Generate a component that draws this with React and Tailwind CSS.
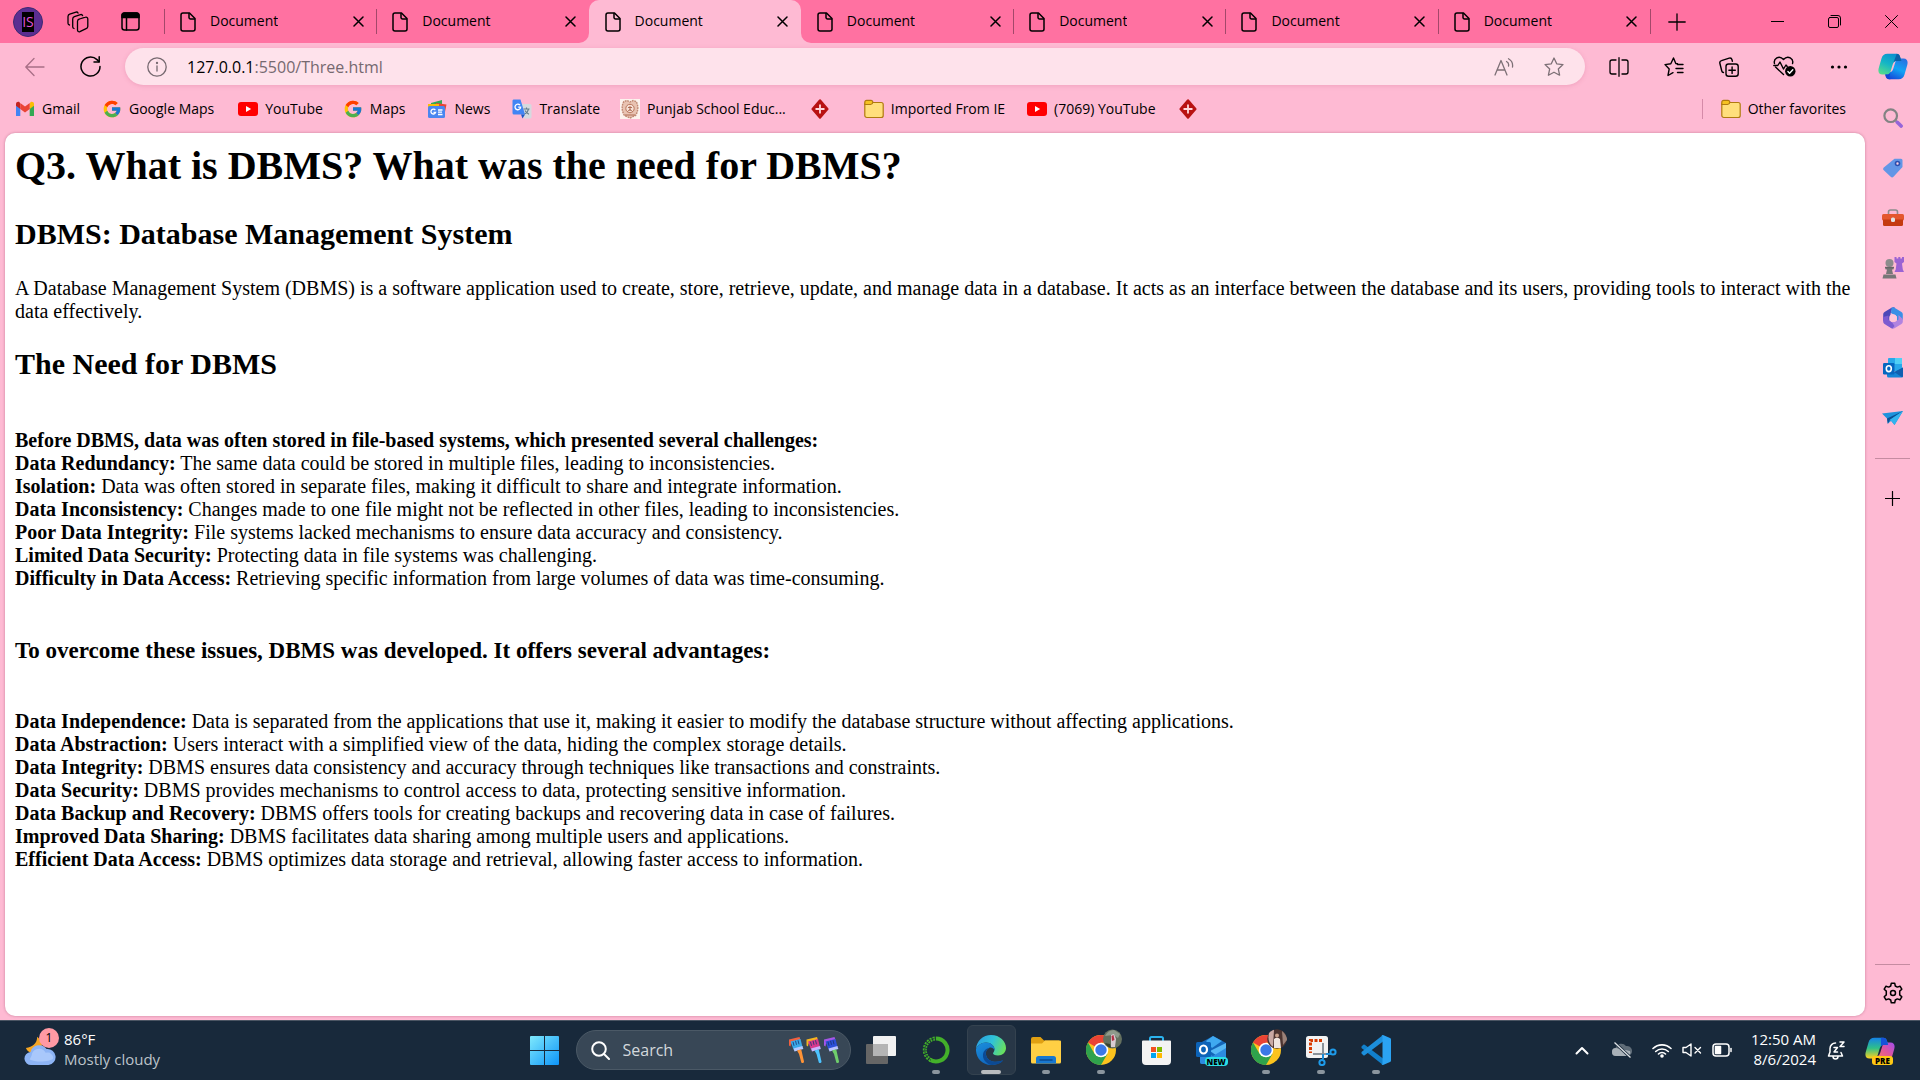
import React from "react";
import { FcGoogle } from "react-icons/fc";

const Line = ({ className = "w-5 h-5", box = "0 0 20 20", sw = 1.3, children }) => (
  <svg
    className={className}
    viewBox={box}
    fill="none"
    stroke="currentColor"
    strokeWidth={sw}
    strokeLinecap="round"
    strokeLinejoin="round"
    aria-hidden="true"
  >
    {children}
  </svg>
);

const Art = ({ className = "w-5 h-5", box = "0 0 20 20", children }) => (
  <svg className={className} viewBox={box} aria-hidden="true">
    {children}
  </svg>
);

/* ---------- browser chrome icons ---------- */

const DocIcon = () => (
  <Line className="w-4 h-5 shrink-0" box="0 0 16 20" sw={1.5}>
    <path d="M3 1h6.500L15 6.500V17a2 2 0 0 1-2 2H3a2 2 0 0 1-2-2V3a2 2 0 0 1 2-2z" />
    <path d="M9 1.500V5.500a1.500 1.500 0 0 0 1.500 1.500H14.500" />
  </Line>
);
const CloseIcon = () => (
  <Line className="w-[11px] h-[11px]" box="0 0 11 11" sw={1.5}>
    <path d="M1 1l9 9M10 1l-9 9" />
  </Line>
);
const WorkspacesIcon = () => (
  <Line className="w-[22px] h-[22px]" box="0 0 22 22" sw={1.3}>
    <path d="M12.500 8l6-1.800a1.700 1.700 0 0 1 2.300 1.700v7.500a2.500 2.500 0 0 1-1.700 2.300l-6.200 3a1.700 1.700 0 0 1-2.400-1.600V10.300A2.500 2.500 0 0 1 12.500 8z" />
    <path d="M7 17.500a1.800 1.800 0 0 1-1.300-1.800V8a2.500 2.500 0 0 1 1.700-2.300L13.500 3.600A1.700 1.700 0 0 1 15.600 4.600" />
    <path d="M2.500 14a1.800 1.800 0 0 1-1.500-1.800V5.500a2.500 2.500 0 0 1 1.700-2.300L9 1.100a1.700 1.700 0 0 1 2 1" />
  </Line>
);
const TabActionsIcon = () => (
  <Line className="w-[19px] h-[19px]" box="0 0 19 19" sw={1.5}>
    <rect x="1" y="1" width="17" height="17" rx="2.500" />
    <path d="M1 3.500A2.500 2.500 0 0 1 3.500 1h12A2.500 2.500 0 0 1 18 3.500V5.500H1z" fill="currentColor" />
    <path d="M5.500 6v12" />
  </Line>
);
const BackIcon = () => (
  <Line className="w-5 h-5 text-[#a86f86]">
    <path d="M19 10H1M9 1.500L.8 10 9 18.500" />
  </Line>
);
const ReloadIcon = () => (
  <Line className="w-[21px] h-[21px]" box="0 0 21 21" sw={1.5}>
    <path d="M20 10.500A9.500 9.500 0 1 1 17 3.600L19 5.600" />
    <path d="M19.200.800V6H14" />
  </Line>
);
const InfoIcon = () => (
  <Line className="w-5 h-5 text-[#766970]">
    <circle cx="10" cy="10" r="9.200" />
    <path d="M10 9v5" />
    <circle cx="10" cy="6" r=".5" fill="currentColor" />
  </Line>
);
const ReadAloudIcon = () => (
  <Line className="w-5 h-[18px] text-[#7d7076]" box="0 0 20 18" sw={1.3}>
    <path d="M1 17L7 2.500 13 17M3 12h8" />
    <path d="M12.500 3.500a4 4 0 0 1 2 4.500M14.500.800A8 8 0 0 1 18.500 9" />
  </Line>
);
const STAR = "M10 1l2.700 5.800 6.300.8-4.700 4.300 1.300 6.300L10 15.200l-5.600 3L5.700 11.900 1 7.600l6.300-.8z";
const StarIcon = () => (
  <Line className="w-5 h-5 text-[#7d7076]">
    <path d={STAR} />
  </Line>
);
const SplitIcon = () => (
  <Line>
    <path d="M7 3H3a2 2 0 0 0-2 2v10a2 2 0 0 0 2 2h4M13 3h4a2 2 0 0 1 2 2v10a2 2 0 0 1-2 2h-4M10 .7v18.600" />
  </Line>
);
const FavoritesIcon = () => (
  <Line sw={1.400}>
    <path d="M13.500 6.800L11.800 6.500 9.500 1 6.800 6.800 1 7.600l4.200 4.300L4 18.500l5-2.800" />
    <path d="M13.500 7.500H19M12 11.500h7M13.500 15.500H19" />
  </Line>
);
const CollectionsIcon = () => (
  <Line sw={1.400}>
    <rect x="7" y="7" width="12.200" height="12.200" rx="2.500" />
    <path d="M13.100 10v6.400M9.900 13.200h6.400" />
    <path d="M4.500 15.500a2 2 0 0 1-1.700-1.500L.9 6.500A2.300 2.300 0 0 1 2.500 3.700L10.200 1.100A2.300 2.300 0 0 1 13 2.700l.4 1.500" />
  </Line>
);
const EssentialsIcon = () => (
  <Line className="w-[23px] h-[21px]" box="0 0 23 21" sw={1.4}>
    <path d="M1.500 7.500C.2 3 6-1.500 10.500 3.500c4.500-5 10.500-.5 9 4M2.500 11l8 7.500" />
    <path d="M.8 9.500h4L7 6l3.500 7 2.500-4 1.200 1.500" />
    <circle cx="17.300" cy="15.300" r="5.200" fill="#000" stroke="none" />
    <path d="M14.900 15.500l1.700 1.700 3.200-3.400" stroke="#fff" />
  </Line>
);
const MoreIcon = () => (
  <Art className="w-5 h-5">
    <circle cx="3.500" cy="10" r="1.600" />
    <circle cx="10" cy="10" r="1.600" />
    <circle cx="16.500" cy="10" r="1.600" />
  </Art>
);

/* ---------- bookmark icons ---------- */

const GmailIcon = () => (
  <Art>
    <path d="M1 5v12h4.300V9.500z" fill="#4285f4" />
    <path d="M19 5v12h-4.300V9.500z" fill="#34a853" />
    <path d="M14.700 5.300V10L19 6.700V5c0-2-2.200-2.700-3.600-1.700z" fill="#fbbc04" />
    <path d="M5.300 5.300V10L1 6.700V5c0-2 2.200-2.700 3.600-1.700z" fill="#c5221f" />
    <path d="M5.300 10V4l4.700 3.600L14.700 4v6L10 13.500z" fill="#ea4335" />
  </Art>
);
const YouTubeIcon = () => (
  <Art>
    <rect x="0" y="3" width="20" height="14" rx="3" fill="#f00" />
    <path d="M8 7v6l5.200-3z" fill="#fff" />
  </Art>
);
const NewsIcon = () => (
  <Art>
    <path d="M4 4l11-3v7H4z" fill="#34a853" />
    <path d="M9 4l10.500 1.500L18 13H9z" fill="#ea4335" />
    <path d="M1 5h11v6H1z" fill="#fbbc04" />
    <rect x="1" y="7" width="17" height="12" rx="1.500" fill="#4a86f0" />
    <path d="M8.300 11.200a2.400 2.400 0 1 0 .3 2.200H6.500M11 11h4.500M11 13.200h4M11 15.500h4.500" stroke="#fff" strokeWidth="1.300" fill="none" />
  </Art>
);
const TranslateIcon = () => (
  <Art>
    <path d="M8 5h10a1.500 1.500 0 0 1 1.500 1.500V18a1.500 1.500 0 0 1-1.500 1.500h-6z" fill="#d5d9df" />
    <path d="M11.500 10h6M14.500 8.500V10M16.500 10c-.5 2.500-2 4-4 5M13 11.500c1 2 2 3 4 3.800" stroke="#607d8b" strokeWidth="1.100" fill="none" />
    <path d="M1.500.5h7l4.500 15H2A1.500 1.500 0 0 1 .5 14V2A1.500 1.500 0 0 1 1.500.5z" fill="#4285f4" />
    <path d="M9 15.500h4l-2.500 4z" fill="#1a56c4" />
    <path d="M8 6.200a2.800 2.800 0 1 0 .6 2H6.200" stroke="#fff" strokeWidth="1.300" fill="none" />
  </Art>
);
const CrestIcon = () => (
  <Art>
    <rect width="20" height="20" fill="#fdf3ee" />
    <path d="M4 2.500C1.500 6 1.500 12 4.500 16.500L10 19l5.500-2.500C18.500 12 18.500 6 16 2.500L13 1.500 10 3 7 1.500z" fill="#e9c3b2" stroke="#c08a74" strokeWidth="1.400" strokeDasharray="1.800 .8" />
    <circle cx="10" cy="9.500" r="4.200" fill="#f6e0d5" stroke="#b9765c" strokeWidth="1" />
    <path d="M8 8.500h4M10 7v5M7.500 12.500L10 10.500l2.500 2M5 16h10" stroke="#a8624a" strokeWidth=".9" fill="none" />
  </Art>
);
const RedDiamondIcon = () => (
  <Art>
    <path d="M10 1.500l7.300 8.500L10 18.500 2.700 10z" fill="#b81212" stroke="#b81212" strokeWidth="2.500" strokeLinejoin="round" />
    <path d="M10 5.500v9M5.500 10h9" stroke="#ffd9dc" strokeWidth="1.800" />
  </Art>
);
const FolderIcon = () => (
  <Art>
    <rect x=".8" y="3.500" width="18.400" height="15" rx="2" fill="#ffdf7c" stroke="#b07a10" strokeWidth="1.200" />
    <path d="M.8 5.500V3.200A1.800 1.800 0 0 1 2.600 1.400H7a1.800 1.800 0 0 1 1.800 1.800A2.500 2.500 0 0 1 6.500 5.500z" fill="#f5c222" stroke="#b07a10" strokeWidth="1.200" />
  </Art>
);

/* ---------- sidebar icons ---------- */

const RIBBON =
  "M10 .5h9.500c2.300 0 3.200 1 4 3.400L24.700 8H20c-2.600 0-3.600 1.500-4.400 4.200l-2.200 7c-.9 2.300-2 3.300-4.400 3.300H4.800C.8 22.500-.2 19.500.8 15.500l3-10.200C4.800 2.200 6.500.5 10 .5z";
const Copilot = () => (
  <Art className="w-[30px] h-[27px]" box="0 0 32 28">
    <defs>
      <linearGradient id="cpA" x1="0.700" y1="0" x2="0.200" y2="1">
        <stop offset="0" stopColor="#0a8fd0" />
        <stop offset=".5" stopColor="#14b5c6" />
        <stop offset="1" stopColor="#55dc8c" />
      </linearGradient>
      <linearGradient id="cpB" x1="0.700" y1="0" x2="0.200" y2="1">
        <stop offset="0" stopColor="#1649d8" />
        <stop offset=".5" stopColor="#12a4f5" />
        <stop offset="1" stopColor="#2a6fe0" />
      </linearGradient>
    </defs>
    <path d={RIBBON} transform="rotate(180 16 14)" fill="url(#cpB)" />
    <path d={RIBBON} fill="url(#cpA)" />
    <path d="M20 .5c2 0 3 1 3.700 3.400L25 8h-5.500c-1.500 0-2.500.7-3 1.800z" fill="#0c62a8" />
    <path d="M7.500 22.500h2c2 0 3-.7 3.800-2.500l-1 3.500c-.7 2.500 0 4 1.500 4h-2.500c-2 0-2.800-1.300-3.200-3z" fill="#1545d6" />
  </Art>
);
const SearchSide = () => (
  <Art className="w-5 h-5">
    <circle cx="7.700" cy="7.700" r="6.300" fill="none" stroke="#838383" strokeWidth="2.200" />
    <path d="M12.300 12.300l2 2" stroke="#8a8a8a" strokeWidth="2" />
    <path d="M14.300 14.300l3.800 3.800" stroke="#9665d8" strokeWidth="3.600" strokeLinecap="round" />
  </Art>
);
const TagSide = () => (
  <Art className="w-5 h-5">
    <path d="M11.500.8H18A1.500 1.500 0 0 1 19.500 2.300V9L10.500 18.800a2 2 0 0 1-2.800 0L.8 12.200a1.800 1.800 0 0 1 0-2.600z" fill="#6296e6" />
    <circle cx="14.500" cy="5.500" r="2" fill="#ffd1df" stroke="#2c4fae" strokeWidth="1.600" />
  </Art>
);
const ToolboxSide = () => (
  <Art className="w-[22px] h-[18px]" box="0 0 22 18">
    <path d="M6.500 6V3a2 2 0 0 1 2-2h5a2 2 0 0 1 2 2v3" fill="none" stroke="#8c8c8c" strokeWidth="1.600" />
    <rect x="0" y="5" width="22" height="6.500" rx="1.500" fill="#e4572e" />
    <path d="M1 10.500h20v5A1.500 1.500 0 0 1 19.500 17h-17A1.500 1.500 0 0 1 1 15.500z" fill="#c43a10" />
    <rect x="9" y="8.500" width="4" height="4.500" rx="1.500" fill="#e3e3e3" />
  </Art>
);
const GamesSide = () => (
  <Art className="w-[22px] h-[22px]" box="0 0 22 22">
    <path d="M12.500 0h2v1.500h1.800V0h2v1.500H20V0h2v5l-2 1.500.8 6 1.200 2.500h-9.500l1.200-2.500.8-6-2-1.500z" fill="#9b63d3" />
    <circle cx="7.500" cy="6" r="4" fill="#8c8c8c" />
    <path d="M3.500 10.500h8v2H10l1 4.500H4l1-4.500H3.500zM1.500 17.500h12l1 4h-14z" fill="#777" />
    <path d="M3 9.800h9v1.600H3z" fill="#666" />
  </Art>
);
const M365Side = () => (
  <Art className="w-5 h-[22px]" box="0 0 20 22">
    <path d="M8.500.8L12 0 8.500 3.500 7.500 7v4.500L3.500 16 1.500 15A2.500 2.500 0 0 1 .2 12.800V7.200A2.500 2.500 0 0 1 1.500 5z" fill="#4b48b8" />
    <path d="M8.500.8A3 3 0 0 1 11.500.8L18.500 5a2.500 2.500 0 0 1 1.300 2.200v5.500L14 14V9.500L8 6z" fill="#3a8fe6" />
    <path d="M19.800 12v2.800a2.500 2.500 0 0 1-1.300 2.200l-7 4.200a3 3 0 0 1-3 0L3.500 18l5-3 3.500 0 3.500-2.500V8z" fill="#b183e0" />
    <path d="M.2 10v4.800A2.500 2.500 0 0 0 1.500 17l7 4.200 1 .3 2-2.500-2-3-4-3.500V8.500z" fill="#7d5bd0" />
    <circle cx="10" cy="11" r="3.800" fill="#ffc6d9" />
  </Art>
);
const OutlookSide = () => (
  <Art className="w-5 h-5">
    <rect x="5" y="0" width="14" height="13" rx="1" fill="#28a8ea" />
    <path d="M12 0h7v6h-7z" fill="#50d0f5" />
    <path d="M4 10l8 4 8-4.500V18a1.500 1.500 0 0 1-1.500 1.500H5.500A1.500 1.500 0 0 1 4 18z" fill="#1484d6" />
    <path d="M20 9.500V18a1.500 1.500 0 0 1-.8 1.300L11 14z" fill="#0f5fb0" />
    <rect x="0" y="5" width="11.500" height="11.500" rx="1.200" fill="#0766bf" />
    <ellipse cx="5.800" cy="10.700" rx="2.500" ry="2.900" fill="none" stroke="#fff" strokeWidth="1.600" />
  </Art>
);
const DropSide = () => (
  <Art className="w-[21px] h-[15px]" box="0 0 21 15">
    <path d="M0 2.500L21 0l-8.500 14-3.300-4.200-3.400 3L5 7.500z" fill="#1d92dc" />
    <path d="M21 0L5 7.500l.8 5.300L8 8.800z" fill="#0c4f92" />
    <path d="M21 0L8 8.800 12.500 14z" fill="#33b3ee" />
  </Art>
);
const GearIcon = () => (
  <Line className="w-[22px] h-[22px]" box="0 0 22 22" sw={1.500}>
    <path d="M9.300 1.200h3.400l.6 2.800 2 1.100 2.700-.9 1.800 3-2.100 1.900v3.800l2.100 1.900-1.800 3-2.700-.9-2 1.100-.6 2.800H9.300L8.700 18l-2-1.100-2.700.9-1.800-3 2.100-1.900V9.100L2.200 7.200l1.800-3 2.700.9 2-1.100z" />
    <circle cx="11" cy="11" r="2.500" />
  </Line>
);

/* ---------- taskbar icons ---------- */

const WeatherArt = () => (
  <Art className="w-8 h-[34px]" box="0 0 34 36">
    <path d="M14 4c0 7-5 11-12 12 2 5 8 7 13 4s6-11-1-16z" fill="#f5a623" />
    <path d="M8 34a7 7 0 0 1-1-14 9.500 9.500 0 0 1 17-3 8.500 8.500 0 0 1 2 17z" fill="#8db4f5" />
    <path d="M8 24a8 8 0 0 1 15-3 6 6 0 0 1 8 6c-3 4-20 4-25 1z" fill="#a9c8fb" />
  </Art>
);
const WindowsLogo = () => (
  <Art className="w-[29px] h-[29px]" box="0 0 29 29">
    <defs>
      <linearGradient id="win" x1="0" y1="0" x2="1" y2="1">
        <stop offset="0" stopColor="#7fe9fc" />
        <stop offset="1" stopColor="#0d94f8" />
      </linearGradient>
    </defs>
    <path d="M1 0h13v14H0V1a1 1 0 0 1 1-1zM15 0h13a1 1 0 0 1 1 1v13H15zM0 15h14v14H1a1 1 0 0 1-1-1zM15 15h14v13a1 1 0 0 1-1 1H15z" fill="url(#win)" />
  </Art>
);
const Brush = ({ x, a, b, c, d }) => (
  <g transform={`translate(${x} 0)`}>
    <path d="M0 2.500L10.500 0l1 3L2 6.500 1.500 9.500 0 8.500z" fill={a} />
    <path d="M1.500 4.500L11.500 2l2 8L4.500 12.500z" fill={b} />
    <path d="M4 4.800l1 4M6.500 3.800l1 4M9 3.300l1 4" stroke="#17316e" strokeWidth=".8" />
    <path d="M4.500 11.500L13.500 9l.8 3L5.500 14.500z" fill={d} />
    <path d="M8 13.500l4.200-1.200L15 24.500a1.500 1.500 0 0 1-2.700 1L10 17z" fill={c} />
  </g>
);
const Brushes = () => (
  <Art className="w-[51px] h-[26px]" box="0 0 51 26">
    <Brush x={0} a="#f2603f" b="#3aa9ea" c="#ff9336" d="#b5c8ff" />
    <Brush x={17.500} a="#f6b51e" b="#d6388f" c="#4cc2ff" d="#c9b4ff" />
    <Brush x={35} a="#a556e8" b="#2c50d8" c="#6fce6c" d="#b9c2ff" />
  </Art>
);
const TaskViewArt = () => (
  <Art className="w-[30px] h-[28px]" box="0 0 30 28">
    <rect x="0" y="8" width="22" height="20" rx="1" fill="#666" />
    <rect x="7" y="0" width="23" height="20" rx="1" fill="#f1f1f1" />
    <rect x="7" y="8" width="15" height="12" fill="#b4b4b4" />
  </Art>
);
const AnacondaArt = () => (
  <Art className="w-7 h-7" box="0 0 28 28">
    <path d="M14 2.500a11.500 11.500 0 1 1-6 21.300" fill="none" stroke="#43b02a" strokeWidth="4" />
    <path d="M9 24.200A11.500 11.500 0 0 1 14 2.500" fill="none" stroke="#43b02a" strokeWidth="4" strokeDasharray="2 1" />
    <path d="M9 24.200A11.500 11.500 0 0 1 14 2.500" fill="none" stroke="#1b3a34" strokeWidth="1" strokeDasharray="1.500 1.500" />
  </Art>
);
const EdgeArt = () => (
  <Art className="w-[30px] h-[30px]" box="0 0 30 30">
    <defs>
      <linearGradient id="edA" x1="0" y1=".3" x2="1" y2=".6">
        <stop offset="0" stopColor="#2a9fe0" />
        <stop offset=".5" stopColor="#2fc2d8" />
        <stop offset="1" stopColor="#6be05a" />
      </linearGradient>
      <linearGradient id="edB" x1="0" y1="0" x2=".6" y2="1">
        <stop offset="0" stopColor="#1b8fdd" />
        <stop offset="1" stopColor="#0f63bb" />
      </linearGradient>
    </defs>
    <path d="M0 14C.5 6 7 0 15 0c9 0 15 6.500 15 13 0 4.500-3.500 7.500-8 7.500-3.500 0-5-1.200-5-2.200 0-.8 1.500-1.500 1.500-4C18.500 11 15 7.500 10 7.500 5 7.500 1.500 10.500 0 14z" fill="url(#edA)" />
    <path d="M0 14C1.500 10.500 5 7.500 10 7.500c5 0 8.500 3.500 8.500 6.800 0 .4 0 .8-.1 1.100C17.500 13 15 12 13 13c-3 1.500-4 5-2.500 8.500 2 4.500 8 6.500 14 4.500 1.500-.5 2.500-.8 2.300-.2C24.500 28.500 20 30 15 30 6 30-.5 22.500 0 14z" fill="url(#edB)" />
    <path d="M13 13c-3 1.500-4 5-2.500 8.500 2 4.500 8 6.500 14 4.500 1.500-.5 2.500-.8 2.300-.2-3 3.700-7.800 4.200-11.800 4.200C9 28 6.500 23.500 7 19.500c.4-3.500 3-6 6-6.500z" fill="#0c4a94" />
  </Art>
);
const ExplorerArt = () => (
  <Art className="w-[30px] h-[27px]" box="0 0 30 27">
    <path d="M0 2a2 2 0 0 1 2-2h7.500l3.500 3.500H28v8H0z" fill="#e0a012" />
    <path d="M0 6.500h11L14 3.500h15a1 1 0 0 1 1 1V25a1.500 1.500 0 0 1-1.500 1.500h-27A1.500 1.500 0 0 1 0 25z" fill="#ffcf44" />
    <path d="M5 26.500V21.500a2.500 2.500 0 0 1 2.500-2.500h15a2.500 2.500 0 0 1 2.500 2.500v5z" fill="#1878d0" />
    <path d="M9 23h12" stroke="#0b4a90" strokeWidth="1.500" strokeLinecap="round" />
  </Art>
);
const ChromeArt = ({ person }) => (
  <Art className="w-9 h-9" box="0 0 36 36">
    <circle cx="15" cy="21" r="15" fill="#fcc31e" />
    <path d="M15 21L2 13.500A15 15 0 0 1 28 13.500H15z" fill="#ea4335" />
    <path d="M2 13.500A15 15 0 0 0 15 36l6.500-11.200-13 0z" fill="#2fa24c" />
    <circle cx="15" cy="21" r="7.300" fill="#fff" />
    <circle cx="15" cy="21" r="5.700" fill="#3b78e7" />
    {person === "garden" ? (
      <g>
        <circle cx="26.500" cy="10" r="9.500" fill="#64705f" />
        <path d="M19 7q3-6 9-6l6 4-2 4-5-3z" fill="#8f9b8c" />
        <path d="M25 6l3-1 2 5-1 8h-4z" fill="#d8cdd2" />
        <path d="M25.500 7l2-1 1 5-2.500 1z" fill="#b33145" />
        <path d="M19 14l5 1 1 4q-4-1-6-5z" fill="#38422f" />
      </g>
    ) : (
      <g>
        <circle cx="26" cy="10" r="9.800" fill="#4c3430" />
        <path d="M18 4q3-3 5-3.300l-1 17Q16 14 18 4z" fill="#caa9a4" />
        <path d="M31 2q5 4 5 9l-4 5z" fill="#9a8178" />
        <circle cx="26" cy="6.500" r="2" fill="#c9a08a" />
        <path d="M23 10q3-2.500 6 0l1 9h-7z" fill="#efe4de" />
      </g>
    )}
  </Art>
);
const StoreArt = () => (
  <Art className="w-[29px] h-[29px]" box="0 0 29 29">
    <path d="M8 6V2.500A1.500 1.500 0 0 1 9.500 1h10A1.500 1.500 0 0 1 21 2.500V6" fill="none" stroke="#2bb3ee" strokeWidth="2" />
    <path d="M0 5.500A1 1 0 0 1 1 4.500h27a1 1 0 0 1 1 1V25a4 4 0 0 1-4 4H4a4 4 0 0 1-4-4z" fill="#f3f3f3" />
    <path d="M9 11h5v5H9z" fill="#f25022" />
    <path d="M15 11h5v5h-5z" fill="#7fba00" />
    <path d="M9 17h5v5H9z" fill="#00a4ef" />
    <path d="M15 17h5v5h-5z" fill="#ffb900" />
  </Art>
);
const OutlookNewArt = () => (
  <Art className="w-[31px] h-[29px]" box="0 0 31 29">
    <path d="M4 7L17 0l13 7v19a2 2 0 0 1-2 2H6a2 2 0 0 1-2-2z" fill="#1566b8" />
    <path d="M10 5L17 0l9 5-10 7z" fill="#3fa9f0" />
    <path d="M30 7v19L14 15z" fill="#56b8f5" />
    <path d="M4 14l13 6 13-8v14a2 2 0 0 1-2 2H6a2 2 0 0 1-2-2z" fill="#2c8be0" />
    <rect x="0" y="6" width="15" height="15" rx="1.500" fill="#0c63b8" />
    <ellipse cx="7.500" cy="13.500" rx="3.500" ry="4" fill="none" stroke="#fff" strokeWidth="2.200" />
  </Art>
);
const SnipArt = () => (
  <Art className="w-[31px] h-[31px]" box="0 0 31 31">
    <rect x="0" y="1" width="22" height="22" rx="2.500" fill="#f2f2f2" />
    <path d="M16 5.500H4.500V18" fill="none" stroke="#d83b01" strokeWidth="3" strokeDasharray="3 1.500" />
    <path d="M17 8v13M7 19h16" stroke="#8a9299" strokeWidth="2" />
    <path d="M17 19v5M20 19h5" stroke="#1a8bd8" strokeWidth="2" />
    <circle cx="27" cy="17" r="2.600" fill="none" stroke="#1e9bea" strokeWidth="2" />
    <circle cx="16" cy="27.500" r="2.600" fill="none" stroke="#1e9bea" strokeWidth="2" />
  </Art>
);
const VSCodeArt = () => (
  <Art className="w-[30px] h-[30px]" box="0 0 30 30">
    <path d="M.5 11.500L2.300 9.800a1 1 0 0 1 1.400 0L22 23.500V30L.5 13z" fill="#1180cc" />
    <path d="M.5 18.500l1.800 1.700a1 1 0 0 0 1.400 0L22 6.500V0L.5 17z" fill="#1c8fdc" />
    <path d="M22 0l7 3a1.700 1.700 0 0 1 1 1.600v20.800a1.700 1.700 0 0 1-1 1.600l-7 3c-1 .4-1.500 0-2-.6.900.6 1.500 0 1.500-1V1.600c0-1-.6-1.600-1.500-1C20.500 0 21 -.4 22 0z" fill="#2ba3f3" />
  </Art>
);

/* ---------- data ---------- */

const bookmarks = [
  { label: "Gmail", icon: <GmailIcon />, gap: "mr-[22px]" },
  { label: "Google Maps", icon: <FcGoogle className="w-5 h-5" />, gap: "mr-6" },
  { label: "YouTube", icon: <YouTubeIcon />, gap: "mr-5" },
  { label: "Maps", icon: <FcGoogle className="w-5 h-5" />, gap: "mr-[22px]" },
  { label: "News", icon: <NewsIcon />, gap: "mr-[22px]" },
  { label: "Translate", icon: <TranslateIcon />, gap: "mr-5" },
  { label: "Punjab School Educ...", icon: <CrestIcon />, gap: "mr-6" },
  { name: "Saved page", icon: <RedDiamondIcon />, gap: "mr-[34px]" },
  { label: "Imported From IE", icon: <FolderIcon />, gap: "mr-[22px]" },
  { label: "(7069) YouTube", icon: <YouTubeIcon />, gap: "mr-[22px]" },
  { name: "Saved link", icon: <RedDiamondIcon />, gap: "" },
];

const challenges = [
  ["Data Redundancy:", "The same data could be stored in multiple files, leading to inconsistencies."],
  ["Isolation:", "Data was often stored in separate files, making it difficult to share and integrate information."],
  ["Data Inconsistency:", "Changes made to one file might not be reflected in other files, leading to inconsistencies."],
  ["Poor Data Integrity:", "File systems lacked mechanisms to ensure data accuracy and consistency."],
  ["Limited Data Security:", "Protecting data in file systems was challenging."],
  ["Difficulty in Data Access:", "Retrieving specific information from large volumes of data was time-consuming."],
];

const advantages = [
  ["Data Independence:", "Data is separated from the applications that use it, making it easier to modify the database structure without affecting applications."],
  ["Data Abstraction:", "Users interact with a simplified view of the data, hiding the complex storage details."],
  ["Data Integrity:", "DBMS ensures data consistency and accuracy through techniques like transactions and constraints."],
  ["Data Security:", "DBMS provides mechanisms to control access to data, protecting sensitive information."],
  ["Data Backup and Recovery:", "DBMS offers tools for creating backups and recovering data in case of failures."],
  ["Improved Data Sharing:", "DBMS facilitates data sharing among multiple users and applications."],
  ["Efficient Data Access:", "DBMS optimizes data storage and retrieval, allowing faster access to information."],
];

const tabs = [0, 1, 2, 3, 4, 5, 6];

/* ---------- pieces ---------- */

const IconButton = ({ label, className, children }) => (
  <button type="button" aria-label={label} className={`flex shrink-0 items-center justify-center ${className}`}>
    {children}
  </button>
);

function Tab({ index }) {
  const active = index === 2;
  const shape = active
    ? "bg-[#febad3] rounded-t-[10px]"
    : index === 1
    ? "bg-[#ff71a1] rounded-br-[10px]"
    : index === 3
    ? "bg-[#ff71a1] rounded-bl-[10px]"
    : "bg-[#ff71a1]";
  const line = index === 2 || index === 3 ? "bg-transparent" : "bg-[#a3486a]";
  return (
    <div className={`min-w-0 flex-1 ${active ? "bg-[#ff71a1]" : ""}`}>
      <div className={`flex h-full items-center pr-[6px] ${shape}`}>
        <span className={`h-[25px] w-px shrink-0 ${line}`} />
        <button type="button" className="flex min-w-0 flex-1 items-center gap-[14px] pl-[15px] text-left text-sm">
          <DocIcon />
          <span className="truncate pb-[2px]">Document</span>
        </button>
        <IconButton label="Close tab" className="w-6 h-6">
          <CloseIcon />
        </IconButton>
      </div>
    </div>
  );
}

function TitleBar() {
  return (
    <header className="flex h-[43px] bg-[#febad3]">
      <div className="flex w-[164px] shrink-0 items-center bg-[#ff71a1] pl-[13px]">
        <button type="button" aria-label="Profile" className="flex h-[30px] w-[30px] items-center justify-center rounded-full border border-[#3c2a72] bg-[#5b2d91]">
          <span className="flex h-5 w-3 items-center justify-center bg-black text-sm text-[#e052d8]">IS</span>
        </button>
        <IconButton label="Workspaces" className="ml-6 w-[22px]">
          <WorkspacesIcon />
        </IconButton>
        <IconButton label="Tab actions" className="ml-8 w-[19px]">
          <TabActionsIcon />
        </IconButton>
      </div>
      <nav aria-label="Tabs" className="flex w-[1486px] min-w-0">
        {tabs.map((i) => (
          <Tab key={i} index={i} />
        ))}
      </nav>
      <div className="flex flex-1 items-center bg-[#ff71a1]">
        <span className="h-[25px] w-px bg-[#a3486a]" />
        <IconButton label="New tab" className="ml-[6px] w-10 h-10">
          <Line className="w-[18px] h-[18px]" box="0 0 18 18" sw={1.3}>
            <path d="M9 .8v16.400M.8 9h16.400" />
          </Line>
        </IconButton>
        <div className="ml-auto flex h-full">
          <IconButton label="Minimize" className="w-[57px]">
            <Line className="w-[13px] h-[13px]" box="0 0 13 13" sw={1}>
              <path d="M0 6.500h13" />
            </Line>
          </IconButton>
          <IconButton label="Restore" className="w-[57px]">
            <Line className="w-[13px] h-[13px]" box="0 0 13 13" sw={1}>
              <rect x=".5" y="2.500" width="10" height="10" rx="1.500" />
              <path d="M3 .5h7a2.500 2.500 0 0 1 2.500 2.500v7" />
            </Line>
          </IconButton>
          <IconButton label="Close" className="w-[57px]">
            <Line className="w-[13px] h-[13px]" box="0 0 13 13" sw={1}>
              <path d="M.5.5l12 12M12.500.5l-12 12" />
            </Line>
          </IconButton>
        </div>
      </div>
    </header>
  );
}

function Toolbar() {
  return (
    <div className="flex h-[42px] items-center pt-[5px] pr-[6px]">
      <IconButton label="Back" className="ml-[15px] w-10 h-9">
        <BackIcon />
      </IconButton>
      <IconButton label="Refresh" className="ml-[15px] mr-[15px] w-10 h-9">
        <ReloadIcon />
      </IconButton>
      <div className="flex h-[37px] min-w-0 flex-1 items-center rounded-full bg-[#fee2eb] shadow-[0_1px_4px_rgba(200,90,130,0.25)]">
        <IconButton label="Site information" className="ml-3 w-10 h-9">
          <InfoIcon />
        </IconButton>
        <button type="button" aria-label="Address" className="ml-[10px] flex-1 cursor-text text-left text-base text-[#766970]">
          <span className="text-black">127.0.0.1</span>:5500/Three.html
        </button>
        <IconButton label="Read aloud" className="w-10 h-9">
          <ReadAloudIcon />
        </IconButton>
        <IconButton label="Add to favorites" className="ml-[10px] mr-[11px] w-10 h-9">
          <StarIcon />
        </IconButton>
      </div>
      <div className="ml-[14px] flex gap-[15px]">
        <IconButton label="Split screen" className="w-10 h-9"><SplitIcon /></IconButton>
        <IconButton label="Favorites" className="w-10 h-9"><FavoritesIcon /></IconButton>
        <IconButton label="Collections" className="w-10 h-9"><CollectionsIcon /></IconButton>
        <IconButton label="Browser essentials" className="w-10 h-9"><EssentialsIcon /></IconButton>
        <IconButton label="Settings and more" className="w-10 h-9"><MoreIcon /></IconButton>
      </div>
    </div>
  );
}

function Bookmarks() {
  return (
    <nav aria-label="Favorites bar" className="flex h-12 items-center pl-[15px] text-sm">
      {bookmarks.map((b, i) => (
        <a key={i} href="#" aria-label={b.label || b.name} className={`flex shrink-0 items-center gap-[7px] whitespace-nowrap ${b.gap}`}>
          {b.icon}
          {b.label && <span>{b.label}</span>}
        </a>
      ))}
      <span className="ml-auto h-5 w-px bg-[#d58aa8]" />
      <a href="#" className="ml-[18px] mr-[19px] flex items-center gap-[7px] whitespace-nowrap">
        <FolderIcon />
        <span>Other favorites</span>
      </a>
    </nav>
  );
}

const Facts = ({ rows }) =>
  rows.map(([term, text]) => (
    <p key={term}>
      <b>{term}</b> {text}
    </p>
  ));

function Page() {
  return (
    <main className="ml-[5px] mb-1 flex-1 rounded-[10px] bg-white p-[10px] font-['Liberation_Serif',serif] text-xl leading-[23px] text-black shadow-[0_0_3px_rgba(120,40,70,0.4)]">
      <h1 className="text-[40px] leading-[46px] font-bold">Q3. What is DBMS? What was the need for DBMS?</h1>
      <h2 className="mt-7 text-3xl leading-[34px] font-bold">DBMS: Database Management System</h2>
      <p className="mt-[26px]">
        A Database Management System (DBMS) is a software application used to create, store, retrieve, update, and manage
        data in a database. It acts as an interface between the database and its users, providing tools to interact with
        the data effectively.
      </p>
      <h2 className="mt-6 text-3xl leading-[34px] font-bold">The Need for DBMS</h2>
      <div className="mt-12">
        <p className="font-bold">Before DBMS, data was often stored in file-based systems, which presented several challenges:</p>
        <Facts rows={challenges} />
      </div>
      <h3 className="mt-12 text-[23px] leading-[26px] font-bold">
        To overcome these issues, DBMS was developed. It offers several advantages:
      </h3>
      <div className="mt-[46px]">
        <Facts rows={advantages} />
      </div>
    </main>
  );
}

const sideApps = [
  ["Search", <SearchSide />],
  ["Shopping", <TagSide />],
  ["Tools", <ToolboxSide />],
  ["Games", <GamesSide />],
  ["Microsoft 365", <M365Side />],
  ["Outlook", <OutlookSide />],
  ["Drop", <DropSide />],
];

function Sidebar() {
  return (
    <aside className="flex w-[55px] shrink-0 flex-col items-center">
      <IconButton label="Copilot" className="w-10 h-[46px]"><Copilot /></IconButton>
      <div className="mt-1 flex flex-col">
        {sideApps.map(([name, icon]) => (
          <IconButton key={name} label={name} className="w-10 h-[50px]">{icon}</IconButton>
        ))}
      </div>
      <span className="mt-[15px] h-px w-[35px] bg-[#c58ba1]" />
      <IconButton label="Customize sidebar" className="mt-[19px] w-10 h-10">
        <Line className="w-[15px] h-[15px]" box="0 0 15 15" sw={1.2}>
          <path d="M7.500.5v14M.5 7.500h14" />
        </Line>
      </IconButton>
      <span className="mt-auto h-px w-[35px] bg-[#c58ba1]" />
      <IconButton label="Settings" className="mt-2 mb-[7px] w-10 h-10"><GearIcon /></IconButton>
    </aside>
  );
}

function TaskItem({ label, state, children }) {
  return (
    <button
      type="button"
      aria-label={label}
      className="relative flex h-[50px] w-[55px] items-center justify-center"
    >
      {state === "active" && <span className="absolute inset-y-0 inset-x-[3px] rounded-md border border-[#34424f] bg-[#283747]" />}
      <span className="relative">{children}</span>
      {state === "active" && <span className="absolute bottom-[1px] h-1 w-5 rounded-full bg-[#b9bcbf]" />}
      {state === "open" && <span className="absolute bottom-[1px] h-1 w-2 rounded-full bg-[#8b959e]" />}
    </button>
  );
}

function Taskbar() {
  return (
    <footer className="grid h-[60px] shrink-0 grid-cols-[1fr_auto_1fr] items-center border-t border-[#4b5563] bg-[#18293b] pb-px text-white">
      <button type="button" className="flex items-center pl-6 text-left text-[15px] leading-5">
        <span className="relative">
          <WeatherArt />
          <span className="absolute -top-[5px] left-[15px] flex h-5 w-5 items-center justify-center rounded-full bg-[#ff99a4] text-xs text-black">1</span>
        </span>
        <span className="ml-2 pb-[2px]">
          <span className="block">86°F</span>
          <span className="block text-[#bcc3ca]">Mostly cloudy</span>
        </span>
      </button>

      <div className="flex items-center">
        <TaskItem label="Start"><WindowsLogo /></TaskItem>
        <label className="ml-1 mr-[3px] flex h-10 w-[275px] items-center rounded-full border border-[#4b5966] bg-[#384756] pl-[14px] pr-[10px]">
          <Line className="w-[19px] h-[19px] shrink-0" box="0 0 19 19" sw={2}>
            <circle cx="8" cy="8" r="6.800" />
            <path d="M13 13l5 5" />
          </Line>
          <input type="text" placeholder="Search" aria-label="Search" className="ml-[13px] min-w-0 flex-1 bg-transparent text-base outline-none placeholder:text-[#d3d8dc]" />
          <Brushes />
        </label>
        <TaskItem label="Task view"><TaskViewArt /></TaskItem>
        <TaskItem label="Anaconda Navigator" state="open"><AnacondaArt /></TaskItem>
        <TaskItem label="Microsoft Edge" state="active"><EdgeArt /></TaskItem>
        <TaskItem label="File Explorer" state="open"><ExplorerArt /></TaskItem>
        <TaskItem label="Google Chrome" state="open">
          <span className="block pb-[6px] pl-[6px]"><ChromeArt person="garden" /></span>
        </TaskItem>
        <TaskItem label="Microsoft Store"><StoreArt /></TaskItem>
        <TaskItem label="Outlook">
          <OutlookNewArt />
          <span className="absolute -bottom-px left-[9px] rounded-sm bg-[#2be0e6] px-[2px] text-[8px] leading-[9px] font-extrabold text-black">NEW</span>
        </TaskItem>
        <TaskItem label="Google Chrome, second profile" state="open">
          <span className="block pb-[6px] pl-[6px]"><ChromeArt person="portrait" /></span>
        </TaskItem>
        <TaskItem label="Snipping Tool" state="open"><SnipArt /></TaskItem>
        <TaskItem label="Visual Studio Code" state="open"><VSCodeArt /></TaskItem>
      </div>

      <div className="flex items-center justify-end pr-4">
        <IconButton label="Show hidden icons" className="w-10 h-10">
          <Line className="w-[14px] h-[9px]" box="0 0 14 9" sw={2}><path d="M1.500 7.500L7 2l5.500 5.500" /></Line>
        </IconButton>
        <IconButton label="OneDrive" className="w-10 h-10">
          <Art className="w-5 h-4" box="0 0 20 16">
            <path d="M4 14a4 4 0 0 1-.5-8A6 6 0 0 1 14 4a5 5 0 0 1 2 10z" fill="#5f6c78" />
            <path d="M4 14a4 4 0 0 1 0-8l14 3a4 4 0 0 1-2 5z" fill="#a9b1b8" />
            <path d="M2.500.5L18.500 15.500" stroke="#18293b" strokeWidth="3" />
            <path d="M2.500.5L18.500 15.500" stroke="#dfe3e6" strokeWidth="1.300" />
          </Art>
        </IconButton>
        <button type="button" aria-label="Network, volume and battery" className="ml-[5px] flex h-10 items-center">
          <span className="flex w-[30px] justify-center">
            <Line className="w-5 h-[15px]" box="0 0 20 15" sw={1.600}>
              <path d="M1 5.500a13 13 0 0 1 18 0M3.700 8.500a9 9 0 0 1 12.600 0M6.500 11a5 5 0 0 1 7 0" />
              <circle cx="10" cy="13" r="1" fill="currentColor" />
            </Line>
          </span>
          <span className="flex w-[30px] justify-center">
            <Line className="w-5 h-[14px]" box="0 0 20 14" sw={1.4}>
              <path d="M1 4.500h3L9 1v12L4 9.500H1zM13 4.500l5.500 5.500M18.500 4.500L13 10" />
            </Line>
          </span>
          <span className="flex w-[30px] justify-center">
            <Line className="w-5 h-[14px]" box="0 0 20 14" sw={1.500}>
              <rect x="1" y="1" width="16" height="12" rx="3" />
              <rect x="3.500" y="3.500" width="5" height="7" fill="currentColor" />
              <path d="M19 5.500v3" />
            </Line>
          </span>
        </button>
        <button type="button" className="w-[79px] pb-[2px] text-right text-[15px] leading-5 whitespace-nowrap">
          <span className="block">12:50 AM</span>
          <span className="block">8/6/2024</span>
        </button>
        <IconButton label="Notifications" className="w-10 h-10">
          <Line className="w-[18px] h-[19px]" box="0 0 18 19" sw={1.500}>
            <path d="M8.500 2A5.500 5.500 0 0 0 3 7.500V11L1.500 15h14L14 11.500" />
            <path d="M6 15.500a2.500 2.500 0 0 0 5 0" />
            <path d="M13 1h4l-4 4.500h4M7 6.500h3.500L7 11h3.500" />
          </Line>
        </IconButton>
        <button type="button" aria-label="Copilot preview" className="relative flex h-10 w-12 items-center justify-center">
          <Art className="w-[30px] h-[27px]" box="0 0 32 28">
            <defs>
              <linearGradient id="prA" x1="0" y1="0" x2="0" y2="1">
                <stop offset="0" stopColor="#1583e8" />
                <stop offset=".5" stopColor="#2fc088" />
                <stop offset="1" stopColor="#ffd21e" />
              </linearGradient>
              <linearGradient id="prB" x1="1" y1="0" x2="0" y2="1">
                <stop offset="0" stopColor="#ff8a4c" />
                <stop offset=".6" stopColor="#e0559c" />
                <stop offset="1" stopColor="#a04ef0" />
              </linearGradient>
            </defs>
            <path d={RIBBON} transform="rotate(180 16 14)" fill="url(#prB)" />
            <path d={RIBBON} fill="url(#prA)" />
            <path d="M17 .5h2.500c2.300 0 3.200 1 4 3.400L24.700 8H20c-1.500 0-2.500.7-3 1.800z" fill="#1552d8" />
          </Art>
          <span className="absolute bottom-[5px] left-4 rounded-[3px] bg-[#ffc814] px-[3px] text-[8px] leading-[9px] font-extrabold text-black">PRE</span>
        </button>
      </div>
    </footer>
  );
}

export default function App() {
  return (
    <div className="flex min-h-screen flex-col bg-[#febad3] font-['Open_Sans',sans-serif] text-black">
      <TitleBar />
      <div className="flex flex-1">
        <div className="flex min-w-0 flex-1 flex-col">
          <Toolbar />
          <Bookmarks />
          <Page />
        </div>
        <Sidebar />
      </div>
      <Taskbar />
    </div>
  );
}
